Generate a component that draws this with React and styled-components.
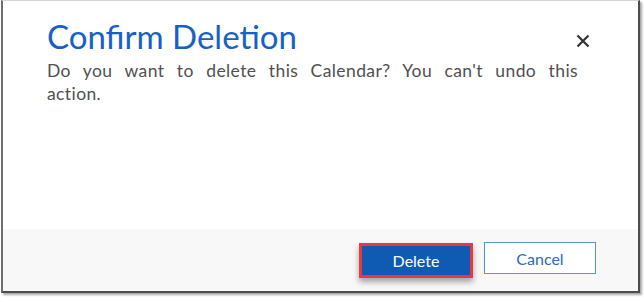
import React from 'react';
import styled, { createGlobalStyle } from 'styled-components';

const GlobalStyle = createGlobalStyle`
  html, body {
    margin: 0;
    padding: 0;
    background: #ffffff;
  }
  * {
    box-sizing: border-box;
  }
`;

const Shot = styled.div`
  width: 644px;
  height: 297px;
  padding: 0 2px 3px 1px;
`;

const Dialog = styled.div`
  width: 639px;
  height: 293px;
  display: flex;
  flex-direction: column;
  border-left: 2px solid #6e6e6e;
  border-top: 1px solid #d4d4d4;
  border-right: 2px solid #4c4c4c;
  border-bottom: 2px solid #4c4c4c;
  box-shadow: 2px 2px 2px rgba(0, 0, 0, 0.35);
  font-family: Lato, "Open Sans", sans-serif;
`;

const Body = styled.div`
  flex: 1;
  background: #ffffff;
  padding: 15px 0 0 44px;
`;

const Header = styled.div`
  display: flex;
  justify-content: space-between;
  align-items: center;
  padding-right: 47px;
`;

const Title = styled.h1`
  margin: 0;
  font-size: 33px;
  font-weight: 400;
  line-height: 40px;
  color: #1761c6;
`;

const CloseButton = styled.button`
  border: 0;
  background: transparent;
  padding: 0;
  width: 16px;
  height: 16px;
  display: flex;
  align-items: center;
  justify-content: center;
  margin-top: 10px;
  cursor: pointer;
`;

const Message = styled.p`
  margin: 3px 0 0;
  width: 531px;
  font-size: 17.5px;
  line-height: 23px;
  letter-spacing: 0.4px;
  word-spacing: 4px;
  color: #505050;
  text-align: justify;
`;

const Footer = styled.div`
  height: 62px;
  background: #f8f8f8;
  display: flex;
  justify-content: flex-end;
  align-items: flex-start;
  gap: 11px;
  padding: 13px 42px 0 0;
`;

const Button = styled.button`
  font-family: Lato, "Open Sans", sans-serif;
  font-size: 16px;
  height: ${p => (p.$primary ? '35px' : '32px')};
  width: ${p => (p.$primary ? '114px' : '112px')};
  margin-top: ${p => (p.$primary ? '1px' : '0')};
  border: ${p => (p.$primary ? '3px solid #e63a3c' : '1px solid #4f95e0')};
  background: ${p => (p.$primary ? '#0f5bb3' : '#ffffff')};
  color: ${p => (p.$primary ? '#ffffff' : '#2a6bc4')};
  box-shadow: ${p => (p.$primary ? '0 4px 6px rgba(0, 0, 0, 0.35)' : 'none')};
  padding: 0;
  cursor: pointer;
`;

export default function App() {
  return (
    <>
      <GlobalStyle />
      <Shot>
        <Dialog>
          <Body>
            <Header>
              <Title>Confirm Deletion</Title>
              <CloseButton aria-label="Close">
                <svg width="14" height="14" viewBox="0 0 14 14">
                  <path d="M1.5 1.5 L12.5 12.5 M12.5 1.5 L1.5 12.5" stroke="#333" strokeWidth="2.2" />
                </svg>
              </CloseButton>
            </Header>
            <Message>Do you want to delete this Calendar? You can't undo this action.</Message>
          </Body>
          <Footer>
            <Button $primary>Delete</Button>
            <Button>Cancel</Button>
          </Footer>
        </Dialog>
      </Shot>
    </>
  );
}
